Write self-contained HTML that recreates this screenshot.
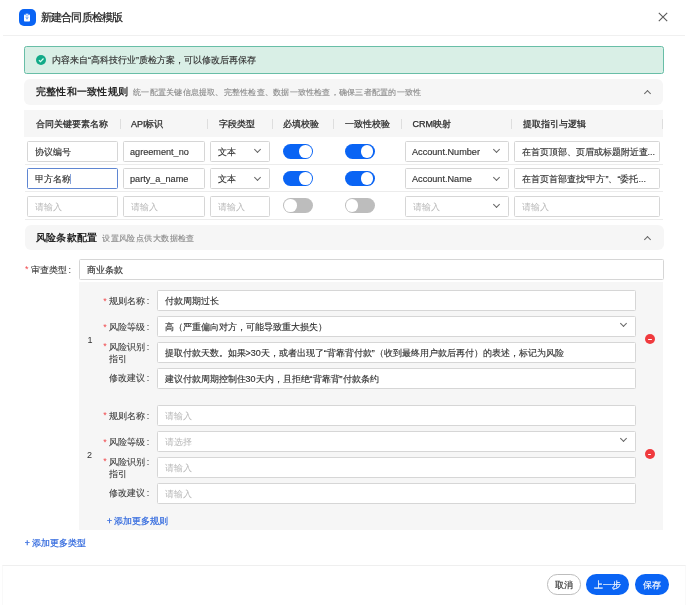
<!DOCTYPE html>
<html><head><meta charset="utf-8">
<style>
*{box-sizing:border-box;margin:0;padding:0}
html,body{width:688px;height:605px;overflow:hidden;background:#fff}
body{position:relative;will-change:transform;font-family:"Liberation Sans",sans-serif;font-size:9px;color:#333}
.a{position:absolute;white-space:nowrap}
.t{position:absolute;white-space:nowrap;line-height:20px}
.inp{position:absolute;height:21px;border:1px solid #d6d6d6;border-radius:1.5px;background:#fff;padding-left:6.5px;padding-top:1.3px;line-height:18px;font-size:9px;color:#333;-webkit-text-stroke:0.15px #333;white-space:nowrap;overflow:hidden}
.inp.ph{color:#b8b8b8;-webkit-text-stroke:0}
.sep{position:absolute;width:1px;height:10px;background:#dedede;top:119px}
.div{position:absolute;left:24.5px;width:638px;height:1px;background:#ececec}
.tog{position:absolute;width:30px;height:15px;border-radius:8px;background:#0a64f4}
.tog::after{content:"";position:absolute;top:1.2px;right:1.2px;width:12.6px;height:12.6px;border-radius:50%;background:#fff}
.tog.off{background:#bdbdbd}
.tog.off::after{right:auto;left:1.2px}
.chev{position:absolute;width:5px;height:5px;border-right:1.1px solid #666;border-bottom:1.1px solid #666;transform:rotate(45deg)}
.lab{position:absolute;white-space:nowrap;line-height:12px;color:#383838;-webkit-text-stroke:0.08px #383838}
.lab .req{position:absolute;left:-6px;top:-0.7px;margin:0;color:#f0474b;-webkit-text-stroke:0}
.col{margin-left:1.6px}
.req{color:#e8383d;margin-right:2px}
.minus{position:absolute;width:10px;height:10px;border-radius:50%;background:#f03a3e}
.minus::after{content:"";position:absolute;left:3.1px;top:4.5px;width:3.8px;height:1px;background:#fff;border-radius:0.5px}
.btn{position:absolute;height:20.3px;border-radius:10.2px;line-height:20px;padding-top:0.8px;text-align:center;font-size:9px;-webkit-text-stroke:0.15px currentColor}
</style></head><body>

<!-- header -->
<div class="a" style="left:19.2px;top:9.4px;width:16.5px;height:16.6px;border-radius:5px;background:#0a64f4"></div>
<svg class="a" style="left:19px;top:9.5px" width="16" height="16" viewBox="0 0 16 16">
  <rect x="5" y="4.5" width="6" height="7" rx="0.8" fill="#fff"/>
  <rect x="6.5" y="3.6" width="3" height="1.6" rx="0.5" fill="#fff" stroke="#0a64f4" stroke-width="0.5"/>
  <path d="M6.5 7.2h3M7 8.7h2" stroke="#0a64f4" stroke-width="0.6"/>
</svg>
<div class="a" style="left:41px;top:6.9px;line-height:20px;font-size:11px;letter-spacing:-0.85px;color:#262626;-webkit-text-stroke:0.25px #262626">新建合同质检模版</div>
<svg class="a" style="left:658.3px;top:12.3px" width="10" height="10" viewBox="0 0 10 10"><path d="M0.8 0.8L9.2 9.2M9.2 0.8L0.8 9.2" stroke="#5a5a5a" stroke-width="1.1"/></svg>
<div class="a" style="left:3px;top:34.5px;width:682px;height:1px;background:#f0f0f0"></div>

<!-- banner -->
<div class="a" style="left:24px;top:46px;width:639.5px;height:27.5px;border:1px solid #68bea7;border-radius:2.5px;background:#d9efe6"></div>
<div class="a" style="left:35.9px;top:54.9px;width:10.2px;height:10.2px;border-radius:50%;background:#12aa88"></div>
<svg class="a" style="left:35.8px;top:55px" width="10" height="10" viewBox="0 0 10 10"><path d="M2.9 5.3L4.5 6.6L7.5 3.5" stroke="#d8fff0" stroke-width="1.2" fill="none"/></svg>
<div class="t" style="left:52px;top:50.3px;font-size:9px;color:#333;-webkit-text-stroke:0.15px #333">内容来自“高科技行业”质检方案，可以修改后再保存</div>

<!-- section 1 header -->
<div class="a" style="left:24px;top:79px;width:639.2px;height:25.6px;border-radius:6px;background:#f6f6f6"></div>
<div class="t" style="left:35.8px;top:82px;font-size:10px;letter-spacing:0.25px;font-weight:bold;color:#262626">完整性和一致性规则</div>
<div class="t" style="left:133.2px;top:82.5px;font-size:8px;letter-spacing:0.23px;color:#8a8a8a;-webkit-text-stroke:0.12px #8a8a8a">统一配置关键信息提取、完整性检查、数据一致性检查，确保三者配置的一致性</div>
<div class="chev" style="left:644.5px;top:90.5px;transform:rotate(225deg)"></div>

<!-- table header -->
<div class="a" style="left:24px;top:110px;width:638.5px;height:27.4px;background:#f6f6f6"></div>
<div class="t" style="left:35.7px;top:114px;color:#2a2a2a;-webkit-text-stroke:0.25px #2a2a2a">合同关键要素名称</div>
<div class="t" style="left:130.9px;top:114px;color:#2a2a2a;-webkit-text-stroke:0.25px #2a2a2a">API标识</div>
<div class="t" style="left:218.6px;top:114px;color:#2a2a2a;-webkit-text-stroke:0.25px #2a2a2a">字段类型</div>
<div class="t" style="left:283.4px;top:114px;color:#2a2a2a;-webkit-text-stroke:0.25px #2a2a2a">必填校验</div>
<div class="t" style="left:345.1px;top:114px;color:#2a2a2a;-webkit-text-stroke:0.25px #2a2a2a">一致性校验</div>
<div class="t" style="left:412.6px;top:114px;color:#2a2a2a;-webkit-text-stroke:0.25px #2a2a2a">CRM映射</div>
<div class="t" style="left:522.6px;top:114px;color:#2a2a2a;-webkit-text-stroke:0.25px #2a2a2a">提取指引与逻辑</div>
<div class="sep" style="left:119.5px"></div>
<div class="sep" style="left:207.3px"></div>
<div class="sep" style="left:272px"></div>
<div class="sep" style="left:333.4px"></div>
<div class="sep" style="left:401px"></div>
<div class="sep" style="left:510.5px"></div>
<div class="sep" style="left:661.5px"></div>

<!-- row 1 -->
<div class="inp" style="left:27px;top:141px;width:91px">协议编号</div>
<div class="inp" style="left:123px;top:141px;width:82px;padding-left:6px;padding-top:0.5px;font-size:9.15px">agreement_no</div>
<div class="inp" style="left:210px;top:141px;width:60px">文本</div>
<div class="chev" style="left:255px;top:147.2px"></div>
<div class="tog" style="left:283.1px;top:143.8px"></div>
<div class="tog" style="left:344.6px;top:143.8px"></div>
<div class="inp" style="left:405px;top:141px;width:104px;padding-left:6px;padding-top:0.5px;font-size:9.15px">Account.Number</div>
<div class="chev" style="left:493.5px;top:147.2px"></div>
<div class="inp" style="left:514px;top:141px;width:146px">在首页顶部、页眉或标题附近查...</div>
<div class="div" style="top:164px"></div>

<!-- row 2 -->
<div class="inp" style="left:27px;top:168px;width:91px;border-color:#5f86d2">甲方名称<span style="display:inline-block;width:1.2px;height:10px;background:#86a2d8;vertical-align:-1.5px;margin-left:-1px"></span></div>
<div class="inp" style="left:123px;top:168px;width:82px;padding-left:6px;padding-top:0.5px;font-size:9.15px">party_a_name</div>
<div class="inp" style="left:210px;top:168px;width:60px">文本</div>
<div class="chev" style="left:255px;top:174.5px"></div>
<div class="tog" style="left:283.1px;top:171px"></div>
<div class="tog" style="left:344.6px;top:171px"></div>
<div class="inp" style="left:405px;top:168px;width:104px;padding-left:6px;padding-top:0.5px;font-size:9.15px">Account.Name</div>
<div class="chev" style="left:493.5px;top:174.5px"></div>
<div class="inp" style="left:514px;top:168px;width:146px">在首页首部查找“甲方”、“委托...</div>
<div class="div" style="top:191.3px"></div>

<!-- row 3 -->
<div class="inp ph" style="left:27px;top:196px;width:91px">请输入</div>
<div class="inp ph" style="left:123px;top:196px;width:82px">请输入</div>
<div class="inp ph" style="left:210px;top:196px;width:60px">请输入</div>
<div class="tog off" style="left:283.1px;top:198.3px"></div>
<div class="tog off" style="left:344.6px;top:198.3px"></div>
<div class="inp ph" style="left:405px;top:196px;width:104px">请输入</div>
<div class="chev" style="left:493.5px;top:201.8px"></div>
<div class="inp ph" style="left:514px;top:196px;width:146px">请输入</div>
<div class="div" style="top:218.6px"></div>

<!-- section 2 header -->
<div class="a" style="left:24.5px;top:225.2px;width:639px;height:25.3px;border-radius:6px;background:#f6f6f6"></div>
<div class="t" style="left:35.9px;top:228px;font-size:10px;letter-spacing:0.3px;font-weight:bold;color:#262626">风险条款配置</div>
<div class="t" style="left:102.2px;top:228.5px;font-size:8px;letter-spacing:0.42px;color:#8a8a8a;-webkit-text-stroke:0.12px #8a8a8a">设置风险点供大数据检查</div>
<div class="chev" style="left:644.5px;top:236.5px;transform:rotate(225deg)"></div>

<!-- review type -->
<div class="lab" style="left:31px;top:263.5px"><span class="req">*</span>审查类型<span class="col">:</span></div>
<div class="inp" style="left:79px;top:259px;width:585px">商业条款</div>

<!-- rule container -->
<div class="a" style="left:79px;top:282.3px;width:584px;height:247.5px;background:#f6f6f6"></div>

<!-- rule 1 -->
<div class="a" style="left:87.5px;top:330px;line-height:20px">1</div>
<div class="lab" style="left:109.2px;top:295.4px"><span class="req">*</span>规则名称<span class="col">:</span></div>
<div class="inp" style="left:157px;top:290px;width:479px">付款周期过长</div>
<div class="lab" style="left:109.2px;top:321.3px"><span class="req">*</span>风险等级<span class="col">:</span></div>
<div class="inp" style="left:157px;top:316px;width:479px">高（严重偏向对方，可能导致重大损失）</div>
<div class="chev" style="left:621.3px;top:321.1px"></div>
<div class="lab" style="left:109.2px;top:340.8px"><span class="req">*</span>风险识别<span class="col">:</span><br>指引</div>
<div class="inp" style="left:157px;top:342px;width:479px">提取付款天数。如果&gt;30天，或者出现了“背靠背付款”（收到最终用户款后再付）的表述，标记为风险</div>
<div class="lab" style="left:109.2px;top:372.2px">修改建议<span class="col">:</span></div>
<div class="inp" style="left:157px;top:368px;width:479px">建议付款周期控制住30天内，且拒绝“背靠背”付款条约</div>
<div class="minus" style="left:644.8px;top:334.3px"></div>

<!-- rule 2 -->
<div class="a" style="left:87px;top:444.7px;line-height:20px">2</div>
<div class="lab" style="left:109.2px;top:410.1px"><span class="req">*</span>规则名称<span class="col">:</span></div>
<div class="inp ph" style="left:157px;top:405px;width:479px">请输入</div>
<div class="lab" style="left:109.2px;top:436.2px"><span class="req">*</span>风险等级<span class="col">:</span></div>
<div class="inp ph" style="left:157px;top:431px;width:479px">请选择</div>
<div class="chev" style="left:621.3px;top:436.1px"></div>
<div class="lab" style="left:109.2px;top:455.6px"><span class="req">*</span>风险识别<span class="col">:</span><br>指引</div>
<div class="inp ph" style="left:157px;top:457px;width:479px">请输入</div>
<div class="lab" style="left:109.2px;top:486.9px">修改建议<span class="col">:</span></div>
<div class="inp ph" style="left:157px;top:483px;width:479px">请输入</div>
<div class="minus" style="left:644.5px;top:449px"></div>

<div class="t" style="left:107px;top:511.4px;color:#3169de"><span style="font-size:8.5px;-webkit-text-stroke:0.3px #3169de">+</span> <span style="letter-spacing:0px;-webkit-text-stroke:0.2px #3169de">添加更多规则</span></div>
<div class="t" style="left:24.8px;top:533.4px;color:#3169de"><span style="font-size:8.5px;-webkit-text-stroke:0.3px #3169de">+</span> <span style="letter-spacing:0px;-webkit-text-stroke:0.2px #3169de">添加更多类型</span></div>

<!-- footer -->
<div class="a" style="left:2px;top:564.6px;width:683.5px;height:45px;border:1px solid #f9f9f9;border-top:1px solid #efefef;border-bottom:none;background:#fff"></div>
<div class="btn" style="left:546.5px;top:574.4px;width:34.5px;border:1px solid #bdbdbd;line-height:18px;color:#333">取消</div>
<div class="btn" style="left:586.3px;top:574.4px;width:43px;background:#0a64f4;color:#fff">上一步</div>
<div class="btn" style="left:635px;top:574.4px;width:34px;background:#0a64f4;color:#fff">保存</div>

</body></html>
